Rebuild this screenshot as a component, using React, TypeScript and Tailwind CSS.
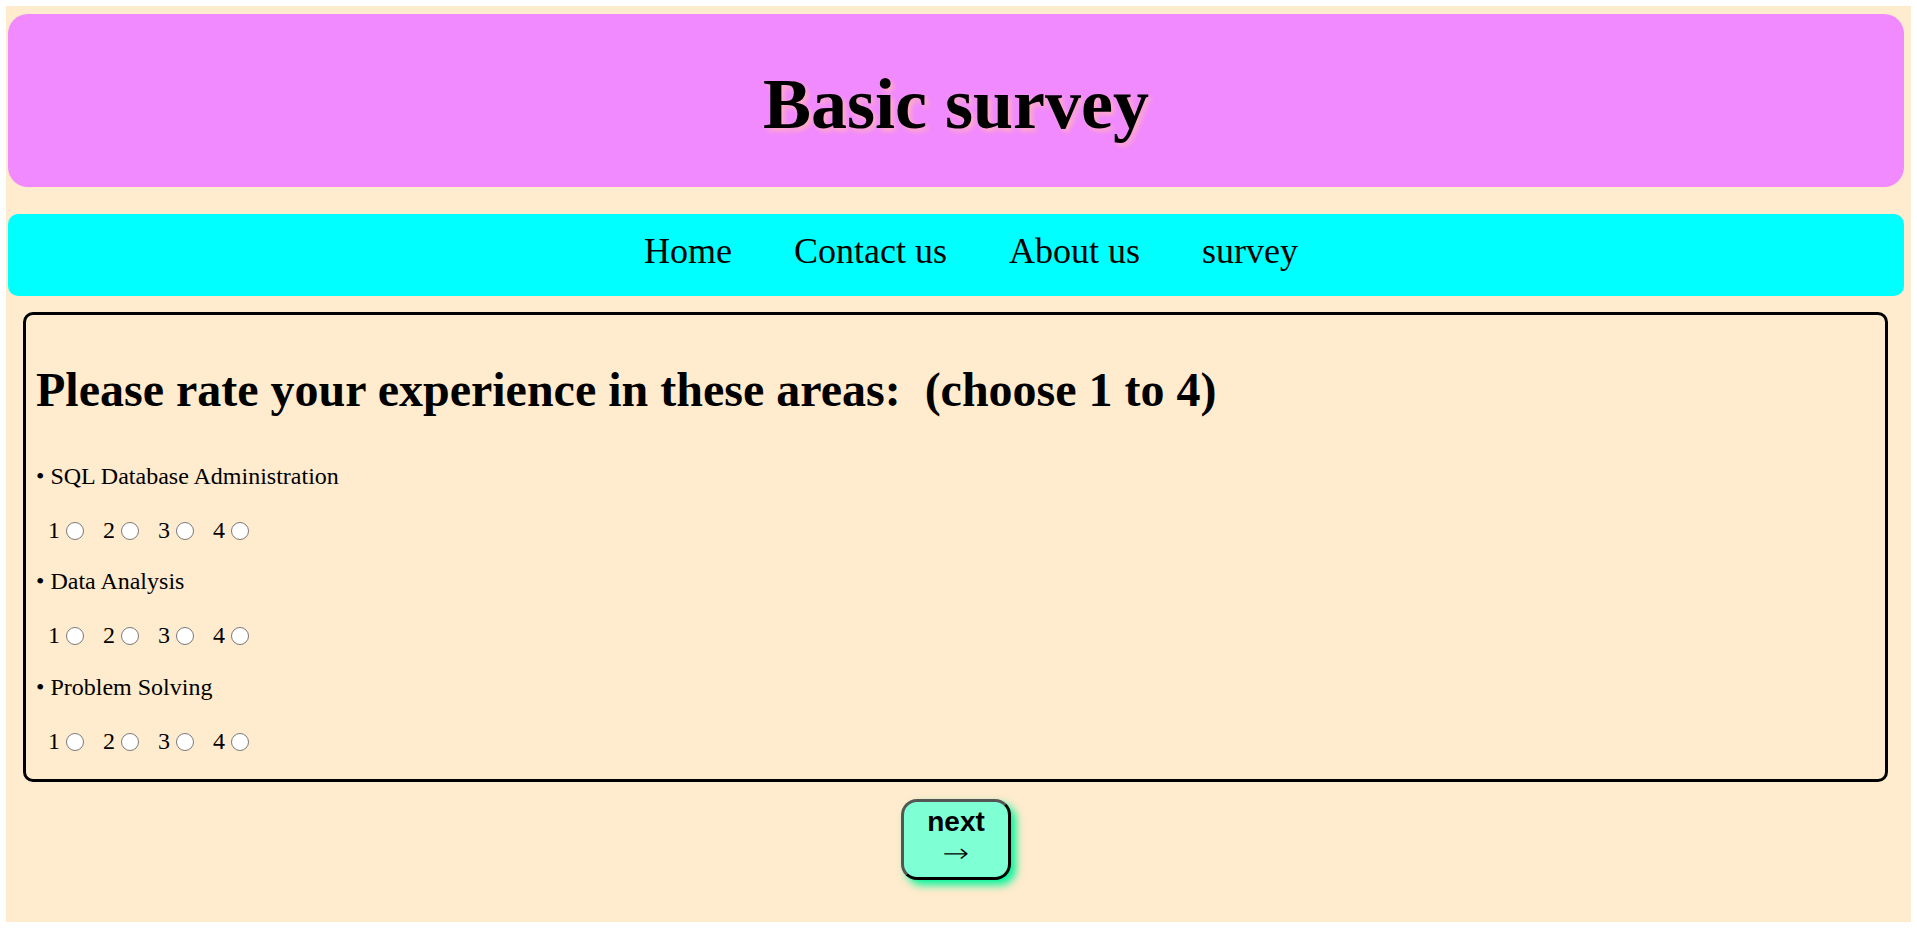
import React from "react";

const items = ["SQL Database Administration", "Data Analysis", "Problem Solving"];

function RadioRow({ name }: { name: string }) {
  return (
    <div className="flex items-center h-[27px] leading-[27px] pl-[12px] mt-[27px]">
      {[1, 2, 3, 4].map((n) => (
        <React.Fragment key={n}>
          <span>{n}</span>
          <input
            type="radio"
            name={name}
            value={n}
            className="appearance-none ml-[6px] mr-[19px] w-[18px] h-[18px] shrink-0 rounded-full border-[1.5px] border-[#7a7a7a] bg-white"
          />
        </React.Fragment>
      ))}
    </div>
  );
}

export default function App() {
  return (
    <div className="bg-white p-[6px] h-[928px] w-full">
      <div className="bg-[#ffebcd] h-[916px] pt-[8px] pl-[2px] pr-[7px] font-['Liberation_Serif','Times_New_Roman',serif] text-black">
        <header className="h-[173px] rounded-[20px] bg-[#f189ff] pt-[50px] text-center">
          <h1 className="text-[72px] font-bold leading-[80px] [text-shadow:3px_3px_5px_#ffb0c0]">
            Basic survey
          </h1>
        </header>

        <nav className="mt-[27px] h-[82px] rounded-[10px] bg-[#00ffff] flex justify-center gap-[62px] pl-[30px] pt-[17px] text-[36px] leading-[40px]">
          <a href="#" className="text-black no-underline">Home</a>
          <a href="#" className="text-black no-underline">Contact us</a>
          <a href="#" className="text-black no-underline">About us</a>
          <a href="#" className="text-black no-underline">survey</a>
        </nav>

        <div className="mt-[16px] ml-[15px] mr-[16px] border-[3px] border-black rounded-[10px] px-[10px] pb-[24px]">
          <h2 className="mt-[48px] text-[48px] font-bold leading-[53px]">
            {"Please rate your experience in these areas:\u00a0 (choose 1 to 4)"}
          </h2>
          {items.map((it, i) => (
            <div key={it}>
              <p
                className={
                  i === 0
                    ? "mt-[47px] text-[24px] leading-[27px]"
                    : i === 1
                    ? "mt-[24px] text-[24px] leading-[27px]"
                    : "mt-[25px] text-[24px] leading-[27px]"
                }
              >
                {"\u2022 " + it}
              </p>
              <div className="text-[24px]">
                <RadioRow name={"q" + i} />
              </div>
            </div>
          ))}
        </div>

        <div className="flex justify-center mt-[17px]">
          <button className="flex flex-col items-center border-[3px] border-t-[#555555] border-l-[#555555] border-b-black border-r-black rounded-[16px] bg-[#7fffd4] px-[23px] pt-[5px] pb-[12px] font-['Liberation_Sans',Arial,sans-serif] font-bold text-[28px] leading-[29px] text-black shadow-[5px_5px_8px_#00f59a]">
            <span>next</span>
            <span className="font-extralight text-[32px] leading-[29px] font-['DejaVu_Sans',sans-serif] [transform:translateY(3px)_scaleY(0.8)]">{"\u2192"}</span>
          </button>
        </div>
      </div>
    </div>
  );
}
